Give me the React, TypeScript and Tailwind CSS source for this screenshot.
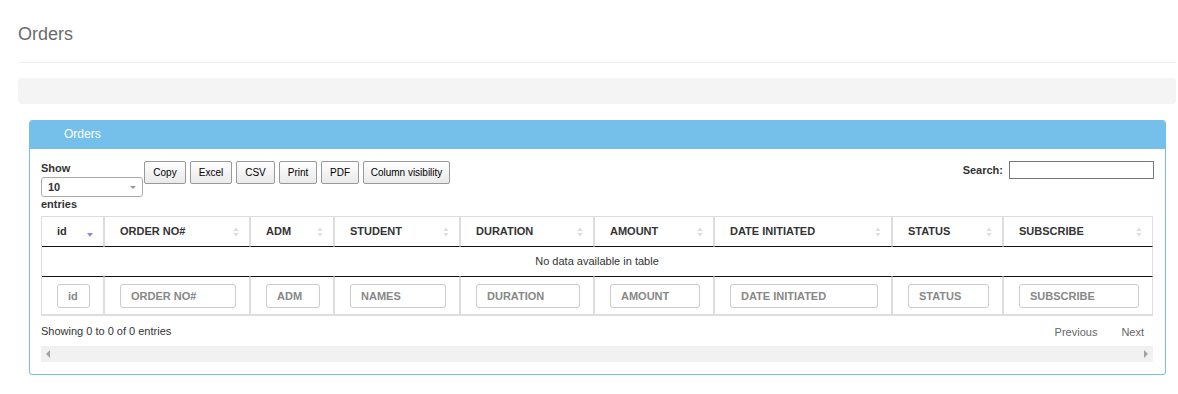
const columns = [
  { label: 'id', placeholder: 'id', width: 'w-[62px]', sorted: true },
  { label: 'ORDER NO#', placeholder: 'ORDER NO#', width: 'w-[146px]' },
  { label: 'ADM', placeholder: 'ADM', width: 'w-[84px]' },
  { label: 'STUDENT', placeholder: 'NAMES', width: 'w-[126px]' },
  { label: 'DURATION', placeholder: 'DURATION', width: 'w-[134px]' },
  { label: 'AMOUNT', placeholder: 'AMOUNT', width: 'w-[120px]' },
  { label: 'DATE INITIATED', placeholder: 'DATE INITIATED', width: 'w-[178px]' },
  { label: 'STATUS', placeholder: 'STATUS', width: 'w-[111px]' },
  { label: 'SUBSCRIBE', placeholder: 'SUBSCRIBE', width: 'w-[150px]' },
];

const buttons = [
  { text: 'Copy', width: 'w-[42px]' },
  { text: 'Excel', width: 'w-[42px]' },
  { text: 'CSV', width: 'w-[39px]' },
  { text: 'Print', width: 'w-[38px]' },
  { text: 'PDF', width: 'w-[38px]' },
  { text: 'Column visibility', width: 'w-[87px]' },
];

function SortIcon({ active }: { active?: boolean }) {
  if (active) {
    return (
      <svg width="8" height="10" viewBox="0 0 8 10" className="absolute right-[9px] top-[13px]">
        <path d="M1 3 L7 3 L4 7 Z" fill="#8c8ce0" />
      </svg>
    );
  }
  return (
    <svg width="8" height="12" viewBox="0 0 8 12" className="absolute right-[9px] top-[9px]">
      <path d="M1.5 5 L6.5 5 L4 1.5 Z" fill="#dcdcdc" />
      <path d="M1.5 7 L6.5 7 L4 10.5 Z" fill="#dcdcdc" />
    </svg>
  );
}

export default function App() {
  return (
    <div className="w-[1178px] h-[394px] bg-white px-[18px] pt-[23px] font-['Liberation_Sans',Arial,sans-serif] text-[#333]">
      <h1 className="text-[18px] leading-[22px] text-[#6b6b6b] pb-[17px] border-b border-[#eeeeee] mr-[-16px]">
        Orders
      </h1>
      <div className="mt-[15px] h-[26px] rounded-[4px] bg-[#f4f4f4] mr-[-16px]" />

      <div className="mt-[16px] ml-[11px] mr-[-6px] rounded-[3px] border border-[#74c0ea]">
        <div className="h-[28px] bg-[#74c0ea] pl-[34px] pb-[2px] flex items-center text-[12px] text-white rounded-t-[2px]">
          Orders
        </div>
        <div className="px-[11px] pt-[12px] pb-[12px]">
          <div className="flex items-start">
            <div className="w-[103px] text-[11px]">
              <div className="leading-[14px] font-bold">Show</div>
              <div className="mt-[2px] h-[20px] w-[102px] rounded-[3px] border border-[#aaaaaa] flex items-center pl-[6px] relative">
                <span className="font-bold">10</span>
                <svg width="6" height="4" viewBox="0 0 6 4" className="absolute right-[6px] top-[8px]">
                  <path d="M0 0 L6 0 L3 3 Z" fill="#999" />
                </svg>
              </div>
              <div className="leading-[14px] font-bold">entries</div>
            </div>
            <div className="flex gap-[4px]">
              {buttons.map((b) => (
                <button
                  key={b.text}
                  className={`${b.width} h-[23px] rounded-[2px] border border-[#999] bg-gradient-to-b from-white to-[#e9e9e9] text-[10px] text-black`}
                >
                  {b.text}
                </button>
              ))}
            </div>
            <div className="ml-auto flex items-center gap-[6px]">
              <span className="text-[11px] font-bold">Search:</span>
              <div className="w-[145px] h-[18px] border border-[#767676]" />
            </div>
          </div>

          <table className="mt-[5px] w-[1112px] border-separate border-spacing-0 text-[11px] table-fixed border-l border-t border-[#dddddd]">
            <thead>
              <tr>
                {columns.map((c) => (
                  <th
                    key={c.label}
                    className={`${c.width} relative h-[30px] text-left font-bold pl-[15px] border-r border-l border-[#dddddd] border-b border-b-[#111] first:border-l-0`}
                  >
                    {c.label}
                    <SortIcon active={c.sorted} />
                  </th>
                ))}
              </tr>
            </thead>
            <tbody>
              <tr>
                <td colSpan={9} className="h-[29px] text-center border-r border-[#dddddd]">
                  No data available in table
                </td>
              </tr>
            </tbody>
            <tfoot>
              <tr>
                {columns.map((c) => (
                  <th
                    key={c.label}
                    className="pl-[15px] pr-[13px] pt-[7px] pb-[6px] border-t border-t-[#111] border-r border-l border-b-2 border-[#dddddd] first:border-l-0 font-bold"
                  >
                    <div className="h-[24px] w-full rounded-[3px] border border-[#cccccc] flex items-center pl-[10px] text-[#888] text-[11px] whitespace-nowrap overflow-hidden">
                      {c.placeholder}
                    </div>
                  </th>
                ))}
              </tr>
            </tfoot>
          </table>

          <div className="flex items-center justify-between h-[30px] text-[11px]">
            <span>Showing 0 to 0 of 0 entries</span>
            <div className="flex text-[#666] text-[11px] pt-[3px]">
              <span className="px-[12px]">Previous</span>
              <span className="pl-[12px] pr-[10px]">Next</span>
            </div>
          </div>

          <div className="h-[16px] w-[1112px] bg-[#f1f1f1] flex items-center justify-between px-[5px]">
            <svg width="5" height="8" viewBox="0 0 5 8">
              <path d="M4 0 L4 8 L0 4 Z" fill="#a3a3a3" />
            </svg>
            <svg width="5" height="8" viewBox="0 0 5 8">
              <path d="M1 0 L1 8 L5 4 Z" fill="#a3a3a3" />
            </svg>
          </div>
        </div>
      </div>
    </div>
  );
}
